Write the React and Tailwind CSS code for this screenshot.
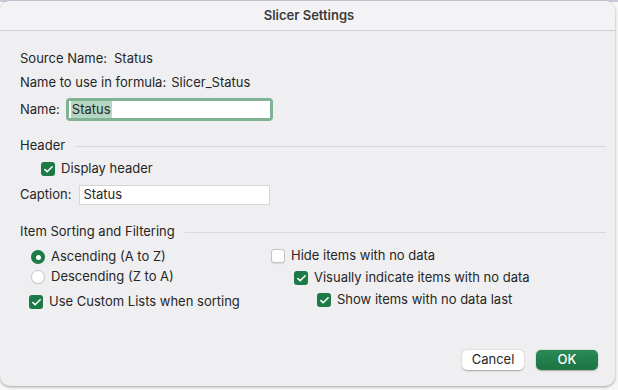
import { Check } from 'lucide-react';

const font = { fontFamily: 'Inter, "Noto Sans", sans-serif' };

function CheckBox({ checked }) {
  if (!checked) {
    return (
      <span className="w-[14px] h-[14px] shrink-0 rounded-[3px] bg-white border border-[#c4c4c7] shadow-[0_0.5px_1px_rgba(0,0,0,0.1)]" />
    );
  }
  return (
    <span className="w-[14px] h-[14px] shrink-0 rounded-[3px] bg-[#1c7a47] flex items-center justify-center">
      <Check size={11} strokeWidth={3.5} className="text-white" />
    </span>
  );
}

function Radio({ checked }) {
  if (!checked) {
    return (
      <span className="w-[14px] h-[14px] shrink-0 rounded-full bg-white border border-[#c9c9cc] shadow-[0_0.5px_1px_rgba(0,0,0,0.1)]" />
    );
  }
  return (
    <span className="w-[14px] h-[14px] shrink-0 rounded-full bg-[#1c7a47] flex items-center justify-center">
      <span className="w-[5px] h-[5px] rounded-full bg-white" />
    </span>
  );
}

function Option({ control, label, className = '' }) {
  return (
    <div className={`flex items-center gap-[6px] h-[16px] ${className}`}>
      {control}
      <span>{label}</span>
    </div>
  );
}

function Section({ title }) {
  return (
    <div className="flex items-center gap-[10px] h-[16px]">
      <span>{title}</span>
      <div className="flex-1 h-px bg-[#d9d9dc]" />
    </div>
  );
}

export default function App() {
  return (
    <div className="w-[618px] h-[390px] bg-[#f7f7f7] overflow-hidden relative" style={font}>
      <div className="h-[2px] bg-[#c6cbd6]" />
      <div className="w-[615px] h-[385px] -mt-[1px] bg-[#efeff1] rounded-[10px] shadow-[0_1px_3px_rgba(0,0,0,0.35)] overflow-hidden flex flex-col text-[13px] text-[#262626]">
        {/* Title bar */}
        <div className="h-[30px] shrink-0 bg-[#f3f3f5] border-b border-[#cfcfd3] flex items-center justify-center">
          <span className="font-semibold text-[13px] text-[#3b3b3b] pl-[3px]">Slicer Settings</span>
        </div>

        <div className="pl-[20px] pr-[9px] pt-[20px] flex flex-col">
          <div className="flex items-center h-[16px]">
            <span>Source Name:</span>
            <span className="ml-[7px]">Status</span>
          </div>
          <div className="flex items-center h-[16px] mt-[8px]">
            <span>Name to use in formula:</span>
            <span className="ml-[5px]">Slicer_Status</span>
          </div>
          <div className="flex items-center h-[23px] mt-[7px]">
            <span>Name:</span>
            <div className="ml-[6px] w-[207px] h-[23px] rounded-[4px] bg-[#7fb393] p-[3px]">
              <div className="w-full h-full bg-white flex items-center pl-[2px]">
                <span className="bg-[#b5d6c1] leading-[17px] px-[1px]">Status</span>
              </div>
            </div>
          </div>

          <div className="mt-[17px]">
            <Section title="Header" />
          </div>
          <Option className="mt-[7px] ml-[21px]" control={<CheckBox checked />} label="Display header" />
          <div className="flex items-center h-[20px] mt-[8px]">
            <span>Caption:</span>
            <div className="ml-[8px] w-[191px] h-[20px] bg-white border border-[#d6d6d8] flex items-center pl-[3px]">
              Status
            </div>
          </div>

          <div className="mt-[19px]">
            <Section title="Item Sorting and Filtering" />
          </div>

          <div className="flex mt-[8px]">
            <div className="w-[251px] flex flex-col">
              <Option className="mt-[1px] ml-[11px]" control={<Radio checked />} label="Ascending (A to Z)" />
              <Option className="mt-[4px] ml-[11px]" control={<Radio />} label="Descending (Z to A)" />
              <Option className="mt-[9px] ml-[9px]" control={<CheckBox checked />} label="Use Custom Lists when sorting" />
            </div>
            <div className="flex flex-col">
              <Option control={<CheckBox />} label="Hide items with no data" />
              <Option className="mt-[6px] ml-[23px]" control={<CheckBox checked />} label="Visually indicate items with no data" />
              <Option className="mt-[6px] ml-[46px]" control={<CheckBox checked />} label="Show items with no data last" />
            </div>
          </div>

          <div className="flex justify-end gap-[12px] mt-[40px] pr-[8px]">
            <button className="w-[62px] h-[20px] rounded-[5px] bg-white shadow-[0_0.5px_1.5px_rgba(0,0,0,0.3)] text-[13px] text-[#262626]">
              Cancel
            </button>
            <button className="w-[62px] h-[20px] rounded-[5px] bg-gradient-to-b from-[#2a8a55] to-[#1b7442] shadow-[0_0.5px_1.5px_rgba(0,0,0,0.3)] text-[13px] font-medium text-white">
              OK
            </button>
          </div>
        </div>
      </div>
    </div>
  );
}
